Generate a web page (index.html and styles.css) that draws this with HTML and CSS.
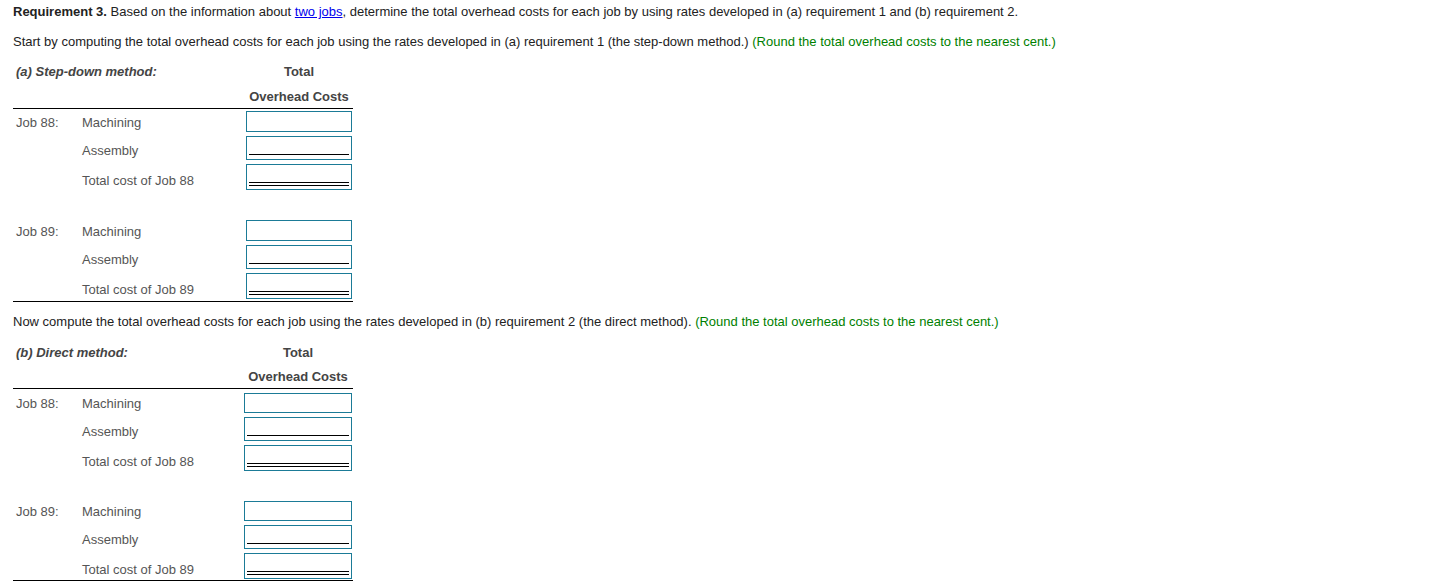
FILE: index.html
```html
<!DOCTYPE html>
<html>
<head>
<meta charset="utf-8">
<link rel="stylesheet" href="styles.css">
</head>
<body>
<div class="page">
  <p class="req"><b>Requirement 3.</b> Based on the information about <a href="#" class="link">two jobs</a>, determine the total overhead costs for each job by using rates developed in (a) requirement 1 and (b) requirement 2.</p>
  <p class="inst">Start by computing the total overhead costs for each job using the rates developed in (a) requirement 1 (the step-down method.) <span class="hint">(Round the total overhead costs to the nearest cent.)</span></p>

  <div class="sheet sheet-a">
    <div class="head">
      <div class="title">(a) Step-down method:</div>
      <div class="colhead">Total</div>
      <div class="colhead">Overhead Costs</div>
    </div>
    <div class="body">
      <div class="group">
        <div class="row r1"><span class="job">Job 88:</span><span class="item">Machining</span><span class="box"></span></div>
        <div class="row r2"><span class="job"></span><span class="item">Assembly</span><span class="box single"></span></div>
        <div class="row r3"><span class="job"></span><span class="item">Total cost of Job 88</span><span class="box double"></span></div>
      </div>
      <div class="group">
        <div class="row r1"><span class="job">Job 89:</span><span class="item">Machining</span><span class="box"></span></div>
        <div class="row r2"><span class="job"></span><span class="item">Assembly</span><span class="box single"></span></div>
        <div class="row r3"><span class="job"></span><span class="item">Total cost of Job 89</span><span class="box double"></span></div>
      </div>
    </div>
  </div>

  <p class="inst inst-b">Now compute the total overhead costs for each job using the rates developed in (b) requirement 2 (the direct method). <span class="hint">(Round the total overhead costs to the nearest cent.)</span></p>

  <div class="sheet sheet-b">
    <div class="head">
      <div class="title">(b) Direct method:</div>
      <div class="colhead">Total</div>
      <div class="colhead">Overhead Costs</div>
    </div>
    <div class="body">
      <div class="group">
        <div class="row r1"><span class="job">Job 88:</span><span class="item">Machining</span><span class="box"></span></div>
        <div class="row r2"><span class="job"></span><span class="item">Assembly</span><span class="box single"></span></div>
        <div class="row r3"><span class="job"></span><span class="item">Total cost of Job 88</span><span class="box double"></span></div>
      </div>
      <div class="group">
        <div class="row r1"><span class="job">Job 89:</span><span class="item">Machining</span><span class="box"></span></div>
        <div class="row r2"><span class="job"></span><span class="item">Assembly</span><span class="box single"></span></div>
        <div class="row r3"><span class="job"></span><span class="item">Total cost of Job 89</span><span class="box double"></span></div>
      </div>
    </div>
  </div>
</div>
</body>
</html>
```

FILE: styles.css
```css
html, body {
  margin: 0;
  padding: 0;
  background: #fff;
}

.page {
  padding: 3px 0 0 13px;
  font-family: "Liberation Sans", Arial, sans-serif;
  font-size: 13px;
  line-height: 18px;
  color: #222;
}

.req, .inst {
  margin: 0;
  white-space: nowrap;
}

.req b {
  font-weight: bold;
}

.inst {
  margin-top: 12px;
}

.inst-b {
  margin-top: 11px;
}

.link {
  color: #0000ee;
  text-decoration: underline;
}

.hint {
  color: #008000;
}

.sheet {
  width: 340px;
  margin-top: 7px;
  color: #555;
}

.sheet-b {
  margin-top: 8px;
}

.head {
  display: grid;
  grid-template-columns: 1fr 106px;
  grid-template-rows: 25px 25px;
  border-bottom: 1px solid #000;
  padding-right: 1px;
}

.sheet-b .head {
  grid-template-columns: 1fr 108px;
  grid-template-rows: 25px 24px;
}

.title {
  grid-row: 1;
  grid-column: 1;
  align-self: center;
  padding-left: 3px;
  padding-top: 2px;
  font-weight: bold;
  font-style: italic;
  color: #444;
}

.colhead {
  grid-column: 2;
  text-align: center;
  align-self: center;
  padding-top: 2px;
  font-weight: bold;
  color: #444;
}

.body {
  border-bottom: 1px solid #000;
  padding-top: 2px;
  padding-bottom: 2px;
}

.sheet-b .body {
  padding-top: 4px;
  padding-bottom: 1px;
}

.group + .group {
  margin-top: 30px;
}

.row {
  display: flex;
  align-items: flex-end;
}

.row + .row {
  margin-top: 4px;
}

.job {
  width: 66px;
  padding-left: 3px;
  line-height: 18px;
}

.item {
  flex: 1;
  line-height: 18px;
}

.box {
  position: relative;
  width: 106px;
  box-sizing: border-box;
  border: 1px solid #1b7b97;
  background: #fff;
  margin-right: 1px;
}

.sheet-b .box {
  width: 108px;
}

.r1 .box { height: 21px; }
.r2 .box { height: 24px; }
.r3 .box { height: 26px; }

.sheet-b .r1 .box { height: 20px; }

.box.single::after {
  content: "";
  position: absolute;
  left: 2px;
  right: 2px;
  bottom: 4px;
  border-bottom: 1px solid #000;
}

.box.double::after {
  content: "";
  position: absolute;
  left: 2px;
  right: 2px;
  bottom: 3px;
  height: 2px;
  border-top: 1px solid #000;
  border-bottom: 1px solid #000;
}
```
